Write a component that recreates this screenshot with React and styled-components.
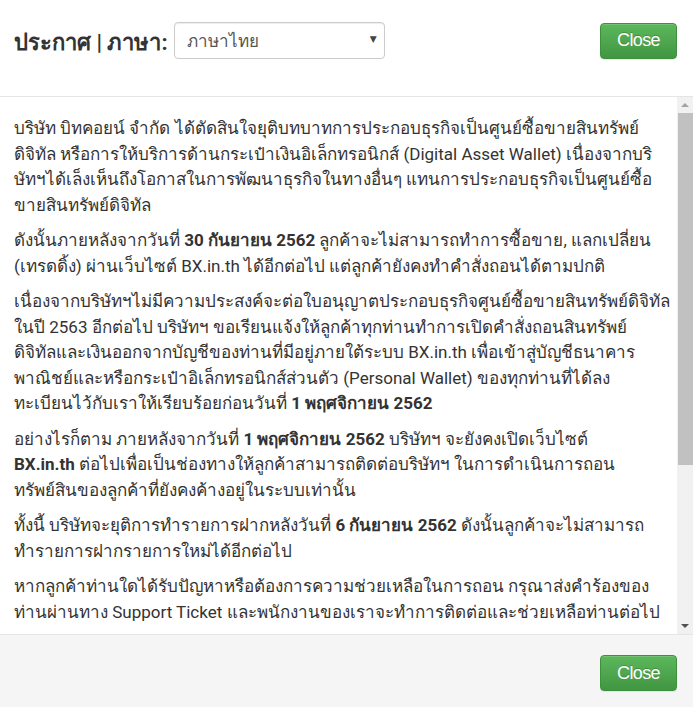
import styled, { createGlobalStyle } from "styled-components";

const GlobalStyle = createGlobalStyle`
  html, body { margin: 0; padding: 0; height: 100%; }
  body {
    font-family: Roboto, "Noto Sans", "DejaVu Sans", sans-serif;
    color: #333;
    background: #fff;
  }
  #root { height: 100%; }
  * { box-sizing: border-box; }
`;

// each paragraph is a list of lines, as the notice wraps them
const paragraphs = [
  [
    ["บริษัท บิทคอยน์ จำกัด ได้ตัดสินใจยุติบทบาทการประกอบธุรกิจเป็นศูนย์ซื้อขายสินทรัพย์"],
    ["ดิจิทัล หรือการให้บริการด้านกระเป๋าเงินอิเล็กทรอนิกส์ (Digital Asset Wallet) เนื่องจากบริ"],
    ["ษัทฯได้เล็งเห็นถึงโอกาสในการพัฒนาธุรกิจในทางอื่นๆ แทนการประกอบธุรกิจเป็นศูนย์ซื้อ"],
    ["ขายสินทรัพย์ดิจิทัล"],
  ],
  [
    ["ดังนั้นภายหลังจากวันที่ ", { b: "30 กันยายน 2562" }, " ลูกค้าจะไม่สามารถทำการซื้อขาย, แลกเปลี่ยน"],
    ["(เทรดดิ้ง) ผ่านเว็บไซต์ BX.in.th ได้อีกต่อไป แต่ลูกค้ายังคงทำคำสั่งถอนได้ตามปกติ"],
  ],
  [
    ["เนื่องจากบริษัทฯไม่มีความประสงค์จะต่อใบอนุญาตประกอบธุรกิจศูนย์ซื้อขายสินทรัพย์ดิจิทัล"],
    ["ในปี 2563 อีกต่อไป บริษัทฯ ขอเรียนแจ้งให้ลูกค้าทุกท่านทำการเปิดคำสั่งถอนสินทรัพย์"],
    ["ดิจิทัลและเงินออกจากบัญชีของท่านที่มีอยู่ภายใต้ระบบ BX.in.th เพื่อเข้าสู่บัญชีธนาคาร"],
    ["พาณิชย์และหรือกระเป๋าอิเล็กทรอนิกส์ส่วนตัว (Personal Wallet) ของทุกท่านที่ได้ลง"],
    ["ทะเบียนไว้กับเราให้เรียบร้อยก่อนวันที่ ", { b: "1 พฤศจิกายน 2562" }],
  ],
  [
    ["อย่างไรก็ตาม ภายหลังจากวันที่ ", { b: "1 พฤศจิกายน 2562" }, " บริษัทฯ จะยังคงเปิดเว็บไซต์"],
    [{ b: "BX.in.th" }, " ต่อไปเพื่อเป็นช่องทางให้ลูกค้าสามารถติดต่อบริษัทฯ ในการดำเนินการถอน"],
    ["ทรัพย์สินของลูกค้าที่ยังคงค้างอยู่ในระบบเท่านั้น"],
  ],
  [
    ["ทั้งนี้ บริษัทจะยุติการทำรายการฝากหลังวันที่ ", { b: "6 กันยายน 2562" }, " ดังนั้นลูกค้าจะไม่สามารถ"],
    ["ทำรายการฝากรายการใหม่ได้อีกต่อไป"],
  ],
  [
    ["หากลูกค้าท่านใดได้รับปัญหาหรือต้องการความช่วยเหลือในการถอน กรุณาส่งคำร้องของ"],
    ["ท่านผ่านทาง Support Ticket และพนักงานของเราจะทำการติดต่อและช่วยเหลือท่านต่อไป"],
  ],
  [
    ["บริษัทฯ ขอขอบพระคุณลูกค้าทุกท่านที่ให้ความไว้วางใจและใช้บริการของเราตลอดมา"],
    ["และขออภัยในความไม่สะดวกมา ณ ที่นี้"],
  ],
  [["ขอแสดงความนับถือ"]],
  [[{ b: "บริษัท บิทคอยน์ จำกัด" }]],
];

const renderPart = (p, k) =>
  typeof p === "string" ? p : <strong key={k}>{p.b}</strong>;

const App = () => (
  <>
    <GlobalStyle />
    <Modal>
      <Header>
        <Title>ประกาศ | ภาษา:</Title>
        <SelectWrap>
          <Select defaultValue="th">
            <option value="th">ภาษาไทย</option>
            <option value="en">English</option>
          </Select>
          <Caret>▼</Caret>
        </SelectWrap>
        <Spacer />
        <CloseButton type="button">Close</CloseButton>
      </Header>
      <BodyRow>
        <Content>
          {paragraphs.map((lines, i) => (
            <Para key={i}>
              {lines.map((line, j) => (
                <Line key={j}>{line.map(renderPart)}</Line>
              ))}
            </Para>
          ))}
        </Content>
        <ScrollBar>
          <ArrowButton><Arrow $up /></ArrowButton>
          <Track>
            <Thumb />
          </Track>
          <ArrowButton><Arrow /></ArrowButton>
        </ScrollBar>
      </BodyRow>
      <Footer>
        <CloseButton type="button">Close</CloseButton>
      </Footer>
    </Modal>
  </>
);

const Modal = styled.div`
display: flex;
flex-direction: column;
height: 100vh;
background: #fff;
`;
const Header = styled.div`
display: flex;
align-items: center;
flex-shrink: 0;
height: 97px;
padding: 0 16px 15px 14px;
border-bottom: 1px solid #e5e5e5;
`;
const Title = styled.h4`
margin: 3px 6px 0 0;
font-size: 22px;
font-weight: 700;
color: #333;
`;
const SelectWrap = styled.div`
position: relative;
width: 211px;
`;
const Select = styled.select`
appearance: none;
width: 100%;
height: 37px;
padding: 0 28px 0 12px;
font-family: inherit;
font-size: 17px;
color: #555;
background: #fff;
border: 1px solid #ccc;
border-radius: 4px;
box-shadow: inset 0 1px 1px rgba(0,0,0,.075);
`;
const Caret = styled.span`
position: absolute;
right: 8px;
top: 12px;
font-size: 9px;
color: #444;
pointer-events: none;
`;
const Spacer = styled.div`
flex: 1;
`;
const CloseButton = styled.button`
width: 77px;
height: 36px;
padding: 0;
font-family: "Liberation Sans", Arial, sans-serif;
font-size: 18px;
letter-spacing: -0.6px;
color: #fff;
background-image: linear-gradient(to bottom, #5cb85c 0, #419641 100%);
border: 1px solid #3e8f3e;
border-radius: 4px;
box-shadow: inset 0 1px 0 rgba(255,255,255,.15), 0 1px 1px rgba(0,0,0,.075);
text-shadow: 0 -1px 0 rgba(0,0,0,.2);
cursor: pointer;
`;
const BodyRow = styled.div`
flex: 1;
display: flex;
min-height: 0;
`;
const Content = styled.div`
flex: 1;
overflow: hidden;
padding: 19px 10px 15px 14px;
font-size: 17px;
line-height: 25.5px;
`;
const Para = styled.p`
margin: 0 0 10px;
`;
const Line = styled.span`
display: block;
white-space: nowrap;
`;
const ScrollBar = styled.div`
display: flex;
flex-direction: column;
width: 16px;
flex-shrink: 0;
background: #f1f1f1;
`;
const ArrowButton = styled.div`
display: flex;
align-items: center;
justify-content: center;
height: 16px;
flex-shrink: 0;
`;
const Arrow = styled.span`
width: 0;
height: 0;
border-left: 4px solid transparent;
border-right: 4px solid transparent;
${p => p.$up
  ? "border-bottom: 4px solid #a3a3a3;"
  : "border-top: 4px solid #505050;"}
`;
const Track = styled.div`
flex: 1;
`;
const Thumb = styled.div`
height: 352px;
margin-left: 1px;
background: #c1c1c1;
`;
const Footer = styled.div`
display: flex;
justify-content: flex-end;
flex-shrink: 0;
padding: 20px 16px 16px;
background: #f5f5f5;
border-top: 1px solid #e5e5e5;
`;

export default App;
